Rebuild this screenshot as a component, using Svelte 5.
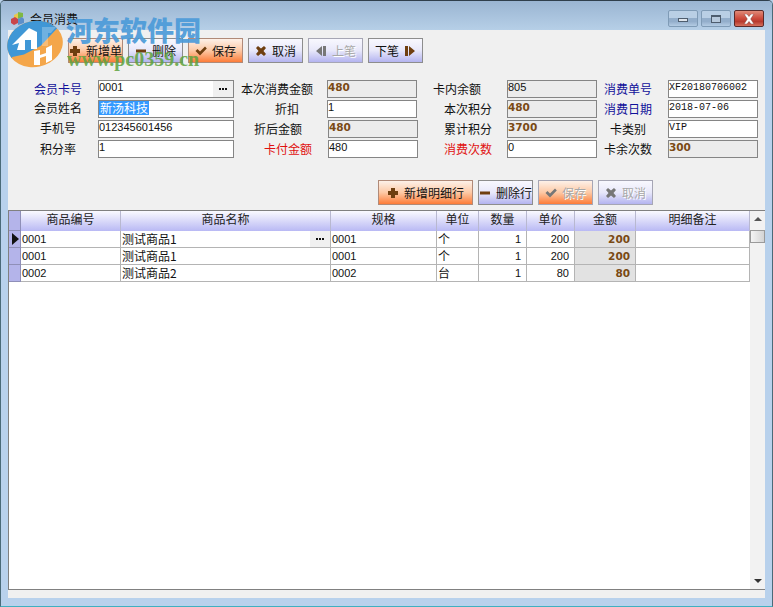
<script>
  const btnsTop = [
    { t: '新增单', i: 'plus', c: 'or' },
    { t: '删除', i: 'minus', c: 'la' },
    { t: '保存', i: 'check', c: 'or' },
    { t: '取消', i: 'x', c: 'la' },
    { t: '上笔', i: 'prev', c: 'la dis' },
    { t: '下笔', i: 'next', c: 'la', after: true }
  ];
  const btnsRow = [
    { t: '新增明细行', i: 'plus', c: 'or wide' },
    { t: '删除行', i: 'minus', c: 'la' },
    { t: '保存', i: 'check', c: 'or dis' },
    { t: '取消', i: 'x', c: 'la dis' }
  ];
  const cols = [100, 210, 106, 42, 48, 48, 61, 114];
  const heads = ['商品编号', '商品名称', '规格', '单位', '数量', '单价', '金额', '明细备注'];
  const rows = [
    ['0001', '测试商品1', '0001', '个', '1', '200', '200'],
    ['0001', '测试商品1', '0001', '个', '1', '200', '200'],
    ['0002', '测试商品2', '0002', '台', '1', '80', '80']
  ];
</script>

{#snippet icon(name)}
  <svg class="ic" viewBox="0 0 12 12" width="12" height="12" aria-hidden="true">
    {#if name === 'plus'}
      <path d="M4 1h4v3h3v4H8v3H4V8H1V4h3z" />
    {:else if name === 'minus'}
      <path d="M1 4.500h10v3H1z" />
    {:else if name === 'check'}
      <path d="M0.500 6l2-2 2.500 2.500L10 1.500l1.800 2L5 10.500z" />
    {:else if name === 'x'}
      <path d="M1 3l2-2 3 2.500L9 1l2 2-2.500 3L11 9l-2 2-3-2.500L3 11 1 9l2.500-3z" />
    {:else if name === 'prev'}
      <path d="M1 6l6-5v10z M8 1h3v10H8z" />
    {:else}
      <path d="M1 1h3v10H1z M5 1l6 5-6 5z" />
    {/if}
  </svg>
{/snippet}

{#snippet button(b)}
  <button class="btn {b.c}" type="button">
    {#if !b.after}{@render icon(b.i)}{/if}
    <span>{b.t}</span>
    {#if b.after}{@render icon(b.i)}{/if}
  </button>
{/snippet}

<div class="win">
  <header class="title">
    <svg class="appicon" viewBox="0 0 16 16" width="16" height="16" aria-hidden="true">
      <path d="M8 1l5 1v4l-5 2z" fill="#7fb843" />
      <path d="M4 4l4-2v5l-4 2z" fill="#e8c94a" />
      <path d="M1 8l4-2 3 2v4l-4 2-3-2z" fill="#c9464a" />
      <path d="M8 8l4-2 2 2v4l-6 2z" fill="#5d8fc9" />
    </svg>
    <span class="ttext">会员消费</span>
    <div class="ctrls">
      <div class="wb"><i class="mn"></i></div>
      <div class="wb"><i class="mx"></i></div>
      <div class="wb close">
        <svg viewBox="0 0 12 10" width="12" height="10" aria-hidden="true"><path d="M1 0h3l2 2.500L8 0h3L7.700 5 11 10H8L6 7.500 4 10H1l3.300-5z" fill="#fff" stroke="#7a3a34" stroke-width=".5"/></svg>
      </div>
    </div>
  </header>

  <main class="body">
    <div class="bar">
      {#each btnsTop as b}{@render button(b)}{/each}
    </div>

    <section class="form">
      <label class="l1 blue">会员卡号</label>
      <div class="f pick"><span class="v">0001</span><b class="dots"><i></i><i></i><i></i></b></div>
      <label class="l2 p14">本次消费金额</label>
      <div class="f ro money">480</div>
      <label class="l3 p26">卡内余额</label>
      <div class="f ro"><span class="v">805</span></div>
      <label class="l4 blue">消费单号</label>
      <div class="f mono">XF20180706002</div>

      <label class="l1 hi">会员姓名</label>
      <div class="f cjk"><span class="sel">新汤科技</span></div>
      <label class="l2 p28">折扣</label>
      <div class="f"><span class="v">1</span></div>
      <label class="l3">本次积分</label>
      <div class="f ro money">480</div>
      <label class="l4 blue">消费日期</label>
      <div class="f mono">2018-07-06</div>

      <label class="l1 hi">手机号</label>
      <div class="f"><span class="v">012345601456</span></div>
      <label class="l2 p25">折后金额</label>
      <div class="f ro money nudge">480</div>
      <label class="l3">累计积分</label>
      <div class="f ro money">3700</div>
      <label class="l4">卡类别</label>
      <div class="f mono">VIP</div>

      <label class="l1">积分率</label>
      <div class="f"><span class="v">1</span></div>
      <label class="l2 red p15">卡付金额</label>
      <div class="f nudge"><span class="v">480</span></div>
      <label class="l3 red">消费次数</label>
      <div class="f"><span class="v">0</span></div>
      <label class="l4">卡余次数</label>
      <div class="f ro money">300</div>
    </section>

    <div class="bar bar2">
      {#each btnsRow as b}{@render button(b)}{/each}
    </div>

    <section class="grid">
      <div class="tablewrap">
        <table>
          <colgroup>
            <col style="width:12px" />
            {#each cols as w}<col style="width:{w}px" />{/each}
          </colgroup>
          <thead>
            <tr>
              <th class="ind"></th>
              {#each heads as h}<th>{h}</th>{/each}
            </tr>
          </thead>
          <tbody>
            {#each rows as r, i}
              <tr>
                <td class="ind">{#if i === 0}<svg viewBox="0 0 8 12" width="8" height="12" aria-hidden="true"><path d="M1 0l7 6-7 6z" fill="#111"/></svg>{/if}</td>
                <td>{r[0]}</td>
                <td class="name">{r[1]}{#if i === 0}<b class="dots cell"><i></i><i></i><i></i></b>{/if}</td>
                <td>{r[2]}</td>
                <td class="cjk12">{r[3]}</td>
                <td class="num">{r[4]}</td>
                <td class="num">{r[5]}</td>
                <td class="num amt">{r[6]}</td>
                <td></td>
              </tr>
            {/each}
          </tbody>
        </table>
      </div>
      <div class="sb">
        <span class="up"></span>
        <span class="thumb"></span>
        <span class="down"></span>
      </div>
    </section>
  </main>

  <div class="mark" aria-hidden="true">
    <svg class="logo" viewBox="0 0 60 50" width="60" height="50">
      <defs>
        <clipPath id="top"><path d="M0 40L6 33 18 33 36 28 62 10 62 -5 0 -5z"/></clipPath>
      </defs>
      <ellipse cx="31" cy="25" rx="28" ry="23" transform="rotate(-12 31 25)" fill="#f4a64a"/>
      <ellipse cx="31" cy="25" rx="28" ry="23" transform="rotate(-12 31 25)" fill="#3f97d6" clip-path="url(#top)"/>
      <path d="M8 26L25 9 33 13 33 30 27 30 27 21 21 21 21 31 13 31 15 24z" fill="#fff"/>
      <path d="M38 8L52 8 47 14 44 14 44 27 38 27z" fill="#fff" opacity=".25"/>
      <path d="M30 32l6-1V46h-6z M42 29l6-3v15l-6 3z" fill="#fff"/>
      <path d="M36 36l6-2v3l-6 2z" fill="#fff"/>
    </svg>
    <span class="mt">河东软件园</span>
    <span class="mu">www.pc0359.cn</span>
  </div>
</div>

<style>
  :global(body) { margin: 0; background: #b9d1ea; }
  .win {
    position: relative;
    width: 773px;
    height: 607px;
    box-sizing: border-box;
    display: flex;
    flex-direction: column;
    overflow: hidden;
    border: 1px solid #4a6a78;
    border-top-color: #2f3f4c;
    border-bottom-color: #3fb0c0;
    border-radius: 5px 5px 0 0;
    background: #b8d1ec;
    font: 12px "Noto Sans CJK SC", "Liberation Sans", sans-serif;
    color: #111;
  }
  .title {
    flex: none;
    height: 29px;
    display: flex;
    align-items: center;
    padding: 6px 8px 0 9px;
    box-sizing: border-box;
    background: linear-gradient(#9ab5d2, #b6cfe7);
  }
  .appicon { flex: none; }
  .ttext { margin-left: 4px; }
  .ctrls { margin-left: auto; display: flex; gap: 3px; }
  .wb {
    width: 28px;
    height: 15px;
    border: 1px solid #7f9bb6;
    border-radius: 2px;
    display: flex;
    align-items: center;
    justify-content: center;
    background: linear-gradient(#b9cfe5 0 50%, #93aecb 50% 70%, #b4cce4);
  }
  .wb i { display: block; box-sizing: border-box; background: #dfe5ec; border: 1px solid #4e5d6e; }
  .wb .mn { width: 10px; height: 4px; margin-top: 2px; }
  .wb .mx { width: 10px; height: 8px; background: #b7c9dc; border-width: 2px 1px 1px; }
  .close {
    border-color: #5a2a2a;
    background: linear-gradient(#e08a78 0, #cc4a3c 50%, #b73a2e 70%, #d6705c);
  }
  .body {
    flex: 1;
    min-height: 0;
    margin: 0 7px 8px;
    padding: 8px 0 8px;
    background: #f0f0f0;
    display: flex;
    flex-direction: column;
  }
  .bar { flex: none; display: flex; gap: 5px; padding-left: 60px; }
  .bar2 { padding-left: 370px; margin-top: 20px; }
  .btn {
    width: 55px;
    height: 25px;
    box-sizing: border-box;
    padding: 0;
    border: 1px solid #8d8d8d;
    display: flex;
    align-items: center;
    justify-content: center;
    gap: 5px;
    font: inherit;
    color: #111;
  }
  .wide { width: 95px; }
  .la { background: linear-gradient(#f8f8fe 0, #e8e8fa 50%, #b4b4f0); }
  .or { background: linear-gradient(#fdf1e8 0, #fdc9a5 50%, #fd7c38); border-color: #b08a78; }
  .ic { flex: none; fill: #6f3f10; }
  .dis { color: #a8a8a8; text-shadow: 1px 1px 0 #fff; border-color: #a6a6b4; }
  .dis .ic { fill: #777; }
  .form {
    flex: none;
    margin-top: 17px;
    display: grid;
    grid-template-columns: 90px 136px 93px 90px 90px 90px 71px 90px;
    grid-auto-rows: 20px;
  }
  .form label { align-self: center; white-space: nowrap; line-height: 18px; margin-bottom: 2px; }
  .form label.hi { margin-bottom: 5px; }
  .l1 { text-align: center; padding-left: 10px; }
  .l2 { text-align: right; }
  .l3 { text-align: right; padding-right: 15px; }
  .l4 { text-align: center; padding-right: 9px; }
  .p14 { padding-right: 14px; }
  .p15 { padding-right: 15px; }
  .p25 { padding-right: 25px; }
  .p26 { padding-right: 26px; }
  .p28 { padding-right: 28px; }
  .blue { color: #10109a; }
  .red { color: #e01010; }
  .f {
    box-sizing: border-box;
    height: 18px;
    border: 1px solid #858585;
    background: #fff;
    font: 11px/13px "Liberation Sans", sans-serif;
    overflow: hidden;
    display: flex;
  }
  .nudge { margin-left: 1px; width: 90px; }
  .ro { background: #ececec; }
  .money { font: bold 10.500px/13px "DejaVu Sans", sans-serif; color: #7a4a14; }
  .mono { font: 10px/14px "Liberation Mono", monospace; }
  .cjk { font-family: "Noto Sans CJK SC", sans-serif; }
  .pick { justify-content: space-between; }
  .sel { background: #3399ff; color: #fff; font-size: 12px; line-height: 14px; height: 14px; padding: 0 1px; }
  .dots {
    width: 20px;
    background: #f0f0f0;
    display: flex;
    align-items: center;
    justify-content: center;
    gap: 1px;
  }
  .dots i { width: 2px; height: 2px; background: #111; }
  .grid {
    flex: 1;
    min-height: 0;
    margin-top: 5px;
    display: flex;
    border-top: 1px solid #808080;
    border-bottom: 1px solid #808080;
    border-left: 1px solid #808080;
    background: #fff;
  }
  .tablewrap { flex: 1; min-width: 0; }
  table {
    border-collapse: separate;
    border-spacing: 0;
    table-layout: fixed;
    width: 741px;
    font: 11px/14px "Liberation Sans", sans-serif;
  }
  th {
    height: 20px;
    padding: 0 0 4px;
    box-sizing: border-box;
    border-right: 1px solid #b8b8d0;
    background: linear-gradient(#fafaff, #b9b9f4);
    font: 12px/14px "Noto Sans CJK SC", sans-serif;
    color: #222;
  }
  td {
    height: 16px;
    padding: 0 0 0 1px;
    box-sizing: content-box;
    border-right: 1px solid #b4b4b4;
    border-bottom: 1px solid #b4b4b4;
    white-space: nowrap;
    overflow: hidden;
  }
  .name { font: 12px/14px "Noto Sans CJK SC", "Liberation Sans", sans-serif; position: relative; }
  .cjk12 { font: 12px/14px "Noto Sans CJK SC", sans-serif; }
  .cell { position: absolute; right: 0; top: 0; height: 16px; }
  .num { text-align: right; padding: 0 5px 0 0; }
  .amt { background: #e2e2e2; font: bold 10.500px/14px "DejaVu Sans", sans-serif; color: #7a4a14; }
  .ind {
    background: #b4b4ea;
    border-right: 1px solid #8f8fb8;
    border-bottom: 1px solid #8f8fb8;
    padding: 0 0 0 2px;
    line-height: 0;
  }
  th.ind { padding: 0; background: #b4b4ea; }
  .sb {
    flex: none;
    width: 15px;
    margin-left: 1px;
    background: #f2f2f2;
    display: flex;
    flex-direction: column;
    align-items: stretch;
  }
  .up, .down { width: 0; height: 0; border: 4px solid transparent; align-self: center; }
  .up { border-top: 0; border-bottom: 4px solid #555; margin-top: 6px; }
  .thumb {
    margin-top: 9px;
    height: 13px;
    box-sizing: border-box;
    border: 1px solid #9a9a9a;
    background: linear-gradient(90deg, #f4f4f4, #d4d4d4);
  }
  .down { border-bottom: 0; border-top: 4px solid #333; margin-top: auto; margin-bottom: 6px; }
  .mark { position: absolute; left: 0; top: 0; width: 220px; height: 72px; pointer-events: none; }
  .logo { position: absolute; left: 3px; top: 18px; }
  .mt {
    position: absolute;
    left: 65px;
    top: 12px;
    font: 900 27px/34px "Noto Sans CJK SC", sans-serif;
    color: #4c9bd9;
    opacity: .92;
    white-space: nowrap;
  }
  .mu {
    position: absolute;
    left: 66px;
    top: 48px;
    font: bold 20px/20px "Liberation Serif", serif;
    color: #5fa33f;
    opacity: .85;
    white-space: nowrap;
  }
</style>
